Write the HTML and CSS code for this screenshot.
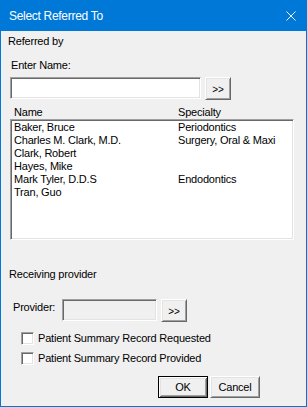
FILE: index.html
```html
<!DOCTYPE html>
<html lang="en">
<head>
  <meta charset="UTF-8" />
  <meta name="viewport" content="width=device-width, initial-scale=1.0"/>
  <title>Select Referred To</title>
  <link rel="stylesheet" href="styles.css">
</head>
<body>

  <div class="dialog">
    <div class="titlebar">
      <span class="title">Select Referred To</span>
      <svg class="close" width="10" height="10" viewBox="0 0 10 10">
        <path d="M0.5 0.5 L9.5 9.5 M9.5 0.5 L0.5 9.5" stroke="#fff" stroke-width="1" fill="none"/>
      </svg>
    </div>

    <div class="content">
      <div class="group-label">Referred by</div>
      <div class="field-label">Enter Name:</div>
      <div class="input-row">
        <div class="textbox name-box"></div>
        <button class="btn browse">&gt;&gt;</button>
      </div>

      <div class="list-header">
        <span>Name</span>
        <span>Specialty</span>
      </div>
      <div class="listbox">
        <div class="list-row"><span>Baker, Bruce</span><span>Periodontics</span></div>
        <div class="list-row"><span>Charles M. Clark, M.D.</span><span>Surgery, Oral &amp; Maxi</span></div>
        <div class="list-row"><span>Clark, Robert</span><span></span></div>
        <div class="list-row"><span>Hayes, Mike</span><span></span></div>
        <div class="list-row"><span>Mark Tyler, D.D.S</span><span>Endodontics</span></div>
        <div class="list-row"><span>Tran, Guo</span><span></span></div>
      </div>

      <div class="group-label receiving">Receiving provider</div>
      <div class="provider-row">
        <span class="provider-label">Provider:</span>
        <div class="textbox provider-box"></div>
        <button class="btn browse">&gt;&gt;</button>
      </div>

      <label class="check first"><span class="check-box"></span>Patient Summary Record Requested</label>
      <label class="check"><span class="check-box"></span>Patient Summary Record Provided</label>

      <div class="actions">
        <button class="btn action default">OK</button>
        <button class="btn action">Cancel</button>
      </div>
    </div>
  </div>

</body>
</html>
```

FILE: styles.css
```css
* {
  margin: 0;
  padding: 0;
  box-sizing: border-box;
}

body {
  font-family: 'Liberation Sans', Arial, sans-serif;
  font-size: 11px;
  line-height: 13px;
  letter-spacing: -0.2px;
  color: #000;
  background: #fff;
}

.dialog {
  width: 307px;
  height: 407px;
  background: #f0f0f0;
  border: 1px solid #0078d7;
  border-top: 0;
  display: flex;
  flex-direction: column;
}

.titlebar {
  height: 31px;
  background: #0078d7;
  color: #fff;
  display: flex;
  align-items: center;
  justify-content: space-between;
  padding: 0 10px 0 8px;
}

.title {
  font-size: 12px;
  line-height: 14px;
  letter-spacing: -0.3px;
}

.content {
  padding: 0 12px 0 9px;
}

.group-label {
  margin: 4px 0 0 -2px;
}

.group-label.receiving {
  margin-top: 28px;
  margin-left: -1px;
}

.field-label {
  margin: 11px 0 0 1px;
}

/* sunken 3D edge */
.textbox,
.listbox,
.check-box {
  border-top: 1px solid #a0a0a0;
  border-left: 1px solid #a0a0a0;
  border-bottom: 1px solid #fff;
  border-right: 1px solid #fff;
  box-shadow: inset 1px 1px #696969, inset -1px -1px #e3e3e3;
  background: #fff;
}

.input-row {
  display: flex;
  align-items: flex-start;
  gap: 4px;
  margin-top: 5px;
  height: 23px;
}

.name-box {
  width: 191px;
  height: 22px;
}

.btn {
  font: inherit;
  letter-spacing: inherit;
  color: #000;
  background: #f0f0f0;
  border-top: 1px solid #fff;
  border-left: 1px solid #fff;
  border-bottom: 1px solid #696969;
  border-right: 1px solid #696969;
  box-shadow: inset 1px 1px #e3e3e3, inset -1px -1px #a0a0a0;
  display: flex;
  align-items: center;
  justify-content: center;
}

.browse {
  width: 26px;
  height: 23px;
  padding-top: 1px;
  font-size: 10px;
}

.list-header {
  display: grid;
  grid-template-columns: 164px 1fr;
  padding-left: 4px;
  margin-top: 6px;
}

.listbox {
  height: 121px;
  padding: 0 0 0 2px;
}

.listbox .list-row:first-child {
  margin-top: 1px;
}

.list-row {
  display: grid;
  grid-template-columns: 164px 1fr;
  height: 13px;
  padding-left: 1px;
  white-space: nowrap;
}

.provider-row {
  display: flex;
  align-items: flex-start;
  margin-top: 18px;
  height: 23px;
}

.provider-label {
  margin: 2px 0 0 3px;
  width: 49px;
}

.provider-box {
  width: 95px;
  height: 22px;
  background: #f0f0f0;
  margin-right: 4px;
}

.check {
  display: flex;
  align-items: center;
  gap: 4px;
  height: 13px;
  margin: 7px 0 0 11px;
}

.check.first {
  margin-top: 10px;
}

.check-box {
  width: 13px;
  height: 13px;
}

.actions {
  display: flex;
  justify-content: flex-end;
  gap: 2px;
  margin-top: 11px;
  padding-right: 34px;
}

.action {
  width: 50px;
  height: 22px;
}

.action.default {
  border: 1px solid #000;
  box-shadow: inset 1px 1px #fff, inset -1px -1px #696969, inset 2px 2px #e3e3e3, inset -2px -2px #a0a0a0;
}
```
